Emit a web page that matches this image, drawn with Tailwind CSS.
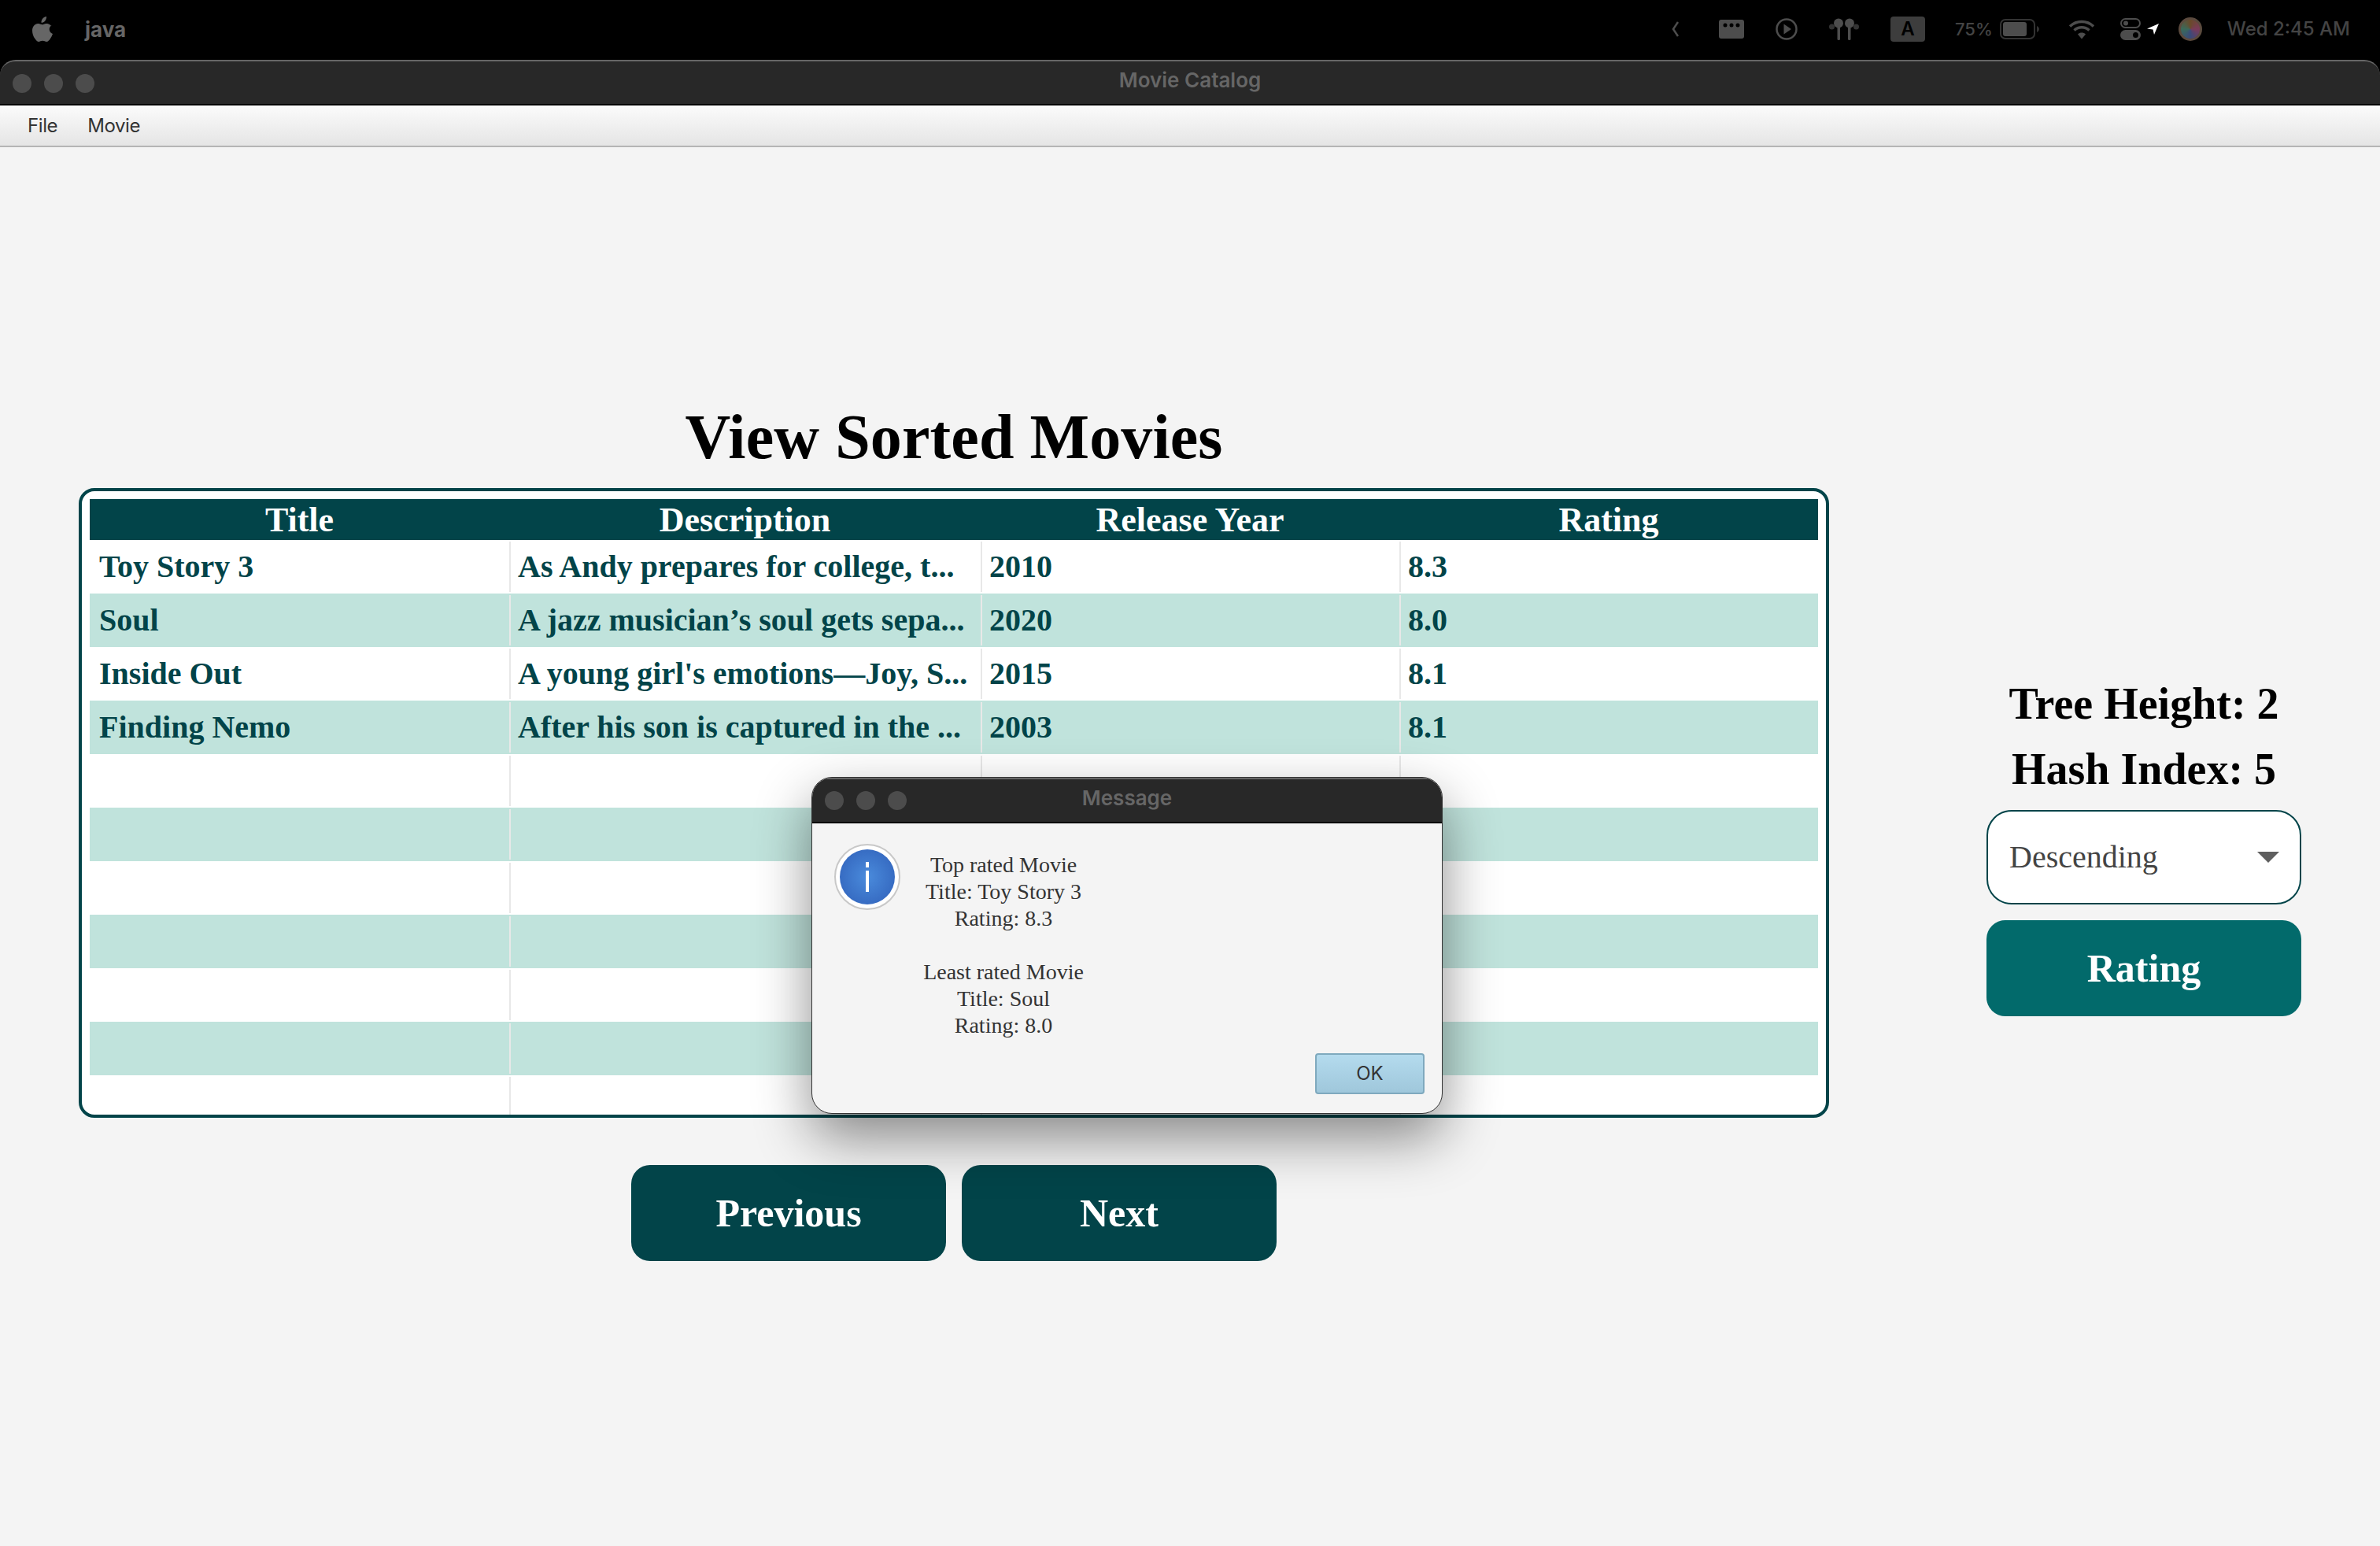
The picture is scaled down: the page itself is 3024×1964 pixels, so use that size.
<!DOCTYPE html>
<html>
<head>
<meta charset="utf-8">
<script src="https://cdn.jsdelivr.net/npm/@tailwindcss/browser@4"></script>
</head>
<body class="bg-black">
<div class="relative flex h-[1964px] w-[3024px] flex-col overflow-hidden bg-black font-['Liberation_Serif',serif]">
  <!-- macOS menu bar -->
  <header class="flex h-[76px] shrink-0 items-center pb-[2px] font-['Inter',sans-serif] text-[#4d4d4d]">
    <svg class="ml-[40px] h-[32px] w-[27px]" viewBox="0 0 27 32"><path fill="#666" d="M19 0c.2 2.200-.6 4-1.700 5.400-1.200 1.400-3 2.400-4.800 2.300-.2-2 .7-4 1.800-5.300C15.500 1.100 17.500.1 19 0zM25.800 10.900c-2 1.200-3.200 3.100-3.100 5.300 0 2.600 1.600 4.700 4.300 5.800-.8 2.200-1.800 4.300-3.200 6.200-1.300 1.900-2.700 3.700-4.700 3.800-2 0-2.700-1.200-5-1.200s-3.100 1.200-5 1.200c-2 .1-3.500-2-4.800-3.900C1.600 24.200-.4 17.400 2.300 12.800c1.300-2.300 3.700-3.800 6.300-3.800 2 0 3.800 1.300 5 1.300s3.300-1.600 5.600-1.400c1 0 3.700.4 5.500 2.700z"/></svg>
    <span class="ml-[41px] text-[26px] font-bold text-[#666]">java</span>
    <div class="ml-auto flex items-center">
      <svg class="h-[20px] w-[10px]" viewBox="0 0 10 20"><path d="M8 1 2 10l6 9" fill="none" stroke="#4d4d4d" stroke-width="2.500"/></svg>
      <svg class="ml-[50px] h-[24px] w-[32px]" viewBox="0 0 32 24"><rect width="32" height="24" rx="3" fill="#4d4d4d"/><circle cx="8" cy="7" r="2.500" fill="#000"/><circle cx="16" cy="7" r="2.500" fill="#000"/><circle cx="24" cy="7" r="2.500" fill="#000"/></svg>
      <svg class="ml-[40px] h-[28px] w-[28px]" viewBox="0 0 28 28"><circle cx="14" cy="14" r="12.500" fill="none" stroke="#4d4d4d" stroke-width="2.500"/><path d="M10.500 7.500 20 14l-9.500 6.500z" fill="#4d4d4d"/></svg>
      <svg class="ml-[39px] h-[28px] w-[40px]" viewBox="0 0 40 28"><g fill="#4d4d4d"><circle cx="13" cy="6.500" r="6"/><circle cx="27" cy="6.500" r="6"/><rect x="11.500" y="9" width="3.500" height="19" rx="1.500"/><rect x="25" y="9" width="3.500" height="19" rx="1.500"/></g><g fill="#333"><circle cx="4.500" cy="11" r="3.500"/><circle cx="35.500" cy="11" r="3.500"/></g></svg>
      <div class="ml-[39px] flex h-[32px] w-[44px] items-center justify-center rounded-[4px] bg-[#3d3d3d] text-[24px] leading-none font-semibold text-black">A</div>
      <span class="ml-[38px] text-[22px] font-medium text-[#444]">75%</span>
      <svg class="ml-[9px] h-[26px] w-[52px]" viewBox="0 0 52 26"><rect x="1" y="1" width="43" height="24" rx="6" fill="none" stroke="#333" stroke-width="2"/><rect x="4" y="4" width="30" height="18" rx="3" fill="#4d4d4d"/><path d="M47 9c2 1 3 2.500 3 4s-1 3-3 4z" fill="#333"/></svg>
      <svg class="ml-[35px] h-[26px] w-[34px]" viewBox="0 0 34 26"><g fill="none" stroke="#4d4d4d" stroke-width="3.500"><path d="M2 9.500c8.500-8 21.500-8 30 0"/><path d="M7.500 14.500c5.500-5 13.500-5 19 0"/></g><path d="M12 19.500c3-2.600 7-2.600 10 0l-5 6z" fill="#4d4d4d"/></svg>
      <svg class="ml-[32px] h-[28px] w-[26px]" viewBox="0 0 26 28"><rect x="1" y="1" width="24" height="11" rx="5.500" fill="none" stroke="#4d4d4d" stroke-width="2"/><circle cx="7" cy="6.500" r="3" fill="#4d4d4d"/><rect y="15" width="26" height="13" rx="6.500" fill="#4d4d4d"/><circle cx="19.500" cy="21.500" r="3.500" fill="#000"/></svg>
      <svg class="ml-[8px] h-[14px] w-[15px]" viewBox="0 0 15 14"><path d="M15 0 9 14 7.500 7.500 0 6.500z" fill="#fff"/></svg>
      <div class="ml-[25px] h-[30px] w-[30px] rounded-full border-[3px] border-[#5b4a3e] bg-[conic-gradient(#6a4a2a,#7a3a5a,#3a4a7a,#3a6a5a,#6a4a2a)]"></div>
      <span class="mr-[38px] ml-[32px] text-[24px] font-medium text-[#444]">Wed 2:45 AM</span>
    </div>
  </header>

  <!-- window -->
  <div class="flex flex-1 flex-col">
    <div class="grid h-[58px] shrink-0 grid-cols-[1fr_auto_1fr] items-center rounded-t-[20px] border-t-2 border-b-2 border-t-[#666] border-b-black bg-[#282828]">
      <div class="flex gap-[16px] pl-[16px] pt-[2px]">
        <span class="h-[24px] w-[24px] rounded-full bg-[#4c4c4c]"></span>
        <span class="h-[24px] w-[24px] rounded-full bg-[#4c4c4c]"></span>
        <span class="h-[24px] w-[24px] rounded-full bg-[#4c4c4c]"></span>
      </div>
      <span class="pb-[8px] font-['Inter',sans-serif] text-[26px] font-semibold text-[#666]">Movie Catalog</span>
      <span></span>
    </div>
    <nav class="flex h-[53px] shrink-0 items-center gap-[38px] border-b-2 border-[#b5b5b5] bg-gradient-to-b from-[#fbfbfb] to-[#e5e5e5] pl-[35px] font-['Inter',sans-serif] text-[24px] tracking-[-0.4px] text-[#333]">
      <span>File</span><span>Movie</span>
    </nav>

    <main class="flex flex-1 bg-[#f4f4f4]">
      <section class="flex w-[2324px] shrink-0 flex-col pl-[100px]">
        <h1 class="mt-[309px] h-[124px] text-center text-[80px] leading-[118px] tracking-[0.1px] font-bold text-black">View Sorted Movies</h1>
        <div class="h-[800px] overflow-hidden rounded-[20px] border-4 border-[#024449] bg-white px-[10px] pt-[10px] text-[#024449]">
          <div class="grid h-[52px] grid-cols-[533px_599px_532px_532px] bg-[#024449] text-center text-[44px] leading-[54px] font-bold whitespace-nowrap text-white">
            <span>Title</span><span>Description</span><span>Release Year</span><span>Rating</span>
          </div>
          <div class="grid h-[68px] grid-cols-[533px_599px_532px_532px] text-[40px] leading-[64px] font-bold whitespace-nowrap">
            <span class="my-[2px] pl-[12px]">Toy Story 3</span><span class="my-[2px] border-l-2 border-[#e8e8e8] pl-[9px]">As Andy prepares for college, t...</span><span class="my-[2px] border-l-2 border-[#e8e8e8] pl-[9px]">2010</span><span class="my-[2px] border-l-2 border-[#e8e8e8] pl-[9px]">8.3</span>
          </div>
          <div class="grid h-[68px] grid-cols-[533px_599px_532px_532px] bg-[#c0e3dc] text-[40px] leading-[64px] font-bold whitespace-nowrap">
            <span class="my-[2px] pl-[12px]">Soul</span><span class="my-[2px] border-l-2 border-[#e8e8e8] pl-[9px]">A jazz musician’s soul gets sepa...</span><span class="my-[2px] border-l-2 border-[#e8e8e8] pl-[9px]">2020</span><span class="my-[2px] border-l-2 border-[#e8e8e8] pl-[9px]">8.0</span>
          </div>
          <div class="grid h-[68px] grid-cols-[533px_599px_532px_532px] text-[40px] leading-[64px] font-bold whitespace-nowrap">
            <span class="my-[2px] pl-[12px]">Inside Out</span><span class="my-[2px] border-l-2 border-[#e8e8e8] pl-[9px]">A young girl's emotions—Joy, S...</span><span class="my-[2px] border-l-2 border-[#e8e8e8] pl-[9px]">2015</span><span class="my-[2px] border-l-2 border-[#e8e8e8] pl-[9px]">8.1</span>
          </div>
          <div class="grid h-[68px] grid-cols-[533px_599px_532px_532px] bg-[#c0e3dc] text-[40px] leading-[64px] font-bold whitespace-nowrap">
            <span class="my-[2px] pl-[12px]">Finding Nemo</span><span class="my-[2px] border-l-2 border-[#e8e8e8] pl-[9px]">After his son is captured in the ...</span><span class="my-[2px] border-l-2 border-[#e8e8e8] pl-[9px]">2003</span><span class="my-[2px] border-l-2 border-[#e8e8e8] pl-[9px]">8.1</span>
          </div>
          <div class="grid h-[68px] grid-cols-[533px_599px_532px_532px]"><span></span><span class="my-[2px] border-l-2 border-[#e8e8e8]"></span><span class="my-[2px] border-l-2 border-[#e8e8e8]"></span><span class="my-[2px] border-l-2 border-[#e8e8e8]"></span></div>
          <div class="grid h-[68px] grid-cols-[533px_599px_532px_532px] bg-[#c0e3dc]"><span></span><span class="my-[2px] border-l-2 border-[#e8e8e8]"></span><span class="my-[2px] border-l-2 border-[#e8e8e8]"></span><span class="my-[2px] border-l-2 border-[#e8e8e8]"></span></div>
          <div class="grid h-[68px] grid-cols-[533px_599px_532px_532px]"><span></span><span class="my-[2px] border-l-2 border-[#e8e8e8]"></span><span class="my-[2px] border-l-2 border-[#e8e8e8]"></span><span class="my-[2px] border-l-2 border-[#e8e8e8]"></span></div>
          <div class="grid h-[68px] grid-cols-[533px_599px_532px_532px] bg-[#c0e3dc]"><span></span><span class="my-[2px] border-l-2 border-[#e8e8e8]"></span><span class="my-[2px] border-l-2 border-[#e8e8e8]"></span><span class="my-[2px] border-l-2 border-[#e8e8e8]"></span></div>
          <div class="grid h-[68px] grid-cols-[533px_599px_532px_532px]"><span></span><span class="my-[2px] border-l-2 border-[#e8e8e8]"></span><span class="my-[2px] border-l-2 border-[#e8e8e8]"></span><span class="my-[2px] border-l-2 border-[#e8e8e8]"></span></div>
          <div class="grid h-[68px] grid-cols-[533px_599px_532px_532px] bg-[#c0e3dc]"><span></span><span class="my-[2px] border-l-2 border-[#e8e8e8]"></span><span class="my-[2px] border-l-2 border-[#e8e8e8]"></span><span class="my-[2px] border-l-2 border-[#e8e8e8]"></span></div>
          <div class="grid h-[68px] grid-cols-[533px_599px_532px_532px]"><span></span><span class="my-[2px] border-l-2 border-[#e8e8e8]"></span><span class="my-[2px] border-l-2 border-[#e8e8e8]"></span><span class="my-[2px] border-l-2 border-[#e8e8e8]"></span></div>
        </div>
        <div class="mt-[60px] flex justify-center gap-[20px]">
          <button class="h-[122px] w-[400px] rounded-[24px] bg-[#024449] text-[50px] font-bold text-white">Previous</button>
          <button class="h-[122px] w-[400px] rounded-[24px] bg-[#024449] text-[50px] font-bold text-white">Next</button>
        </div>
      </section>

      <aside class="ml-[200px] flex w-[400px] flex-col items-center pt-[666px]">
        <p class="h-[83px] text-[56px] leading-[83px] font-bold whitespace-nowrap text-black">Tree Height: 2</p>
        <p class="h-[83px] text-[56px] leading-[83px] font-bold whitespace-nowrap text-black">Hash Index: 5</p>
        <div class="mt-[10px] flex h-[120px] w-full items-center justify-between rounded-[32px] border-2 border-[#024449] bg-white pr-[26px] pl-[27px] text-[40px] text-[#444]">
          <span>Descending</span>
          <svg class="h-[14px] w-[28px]" viewBox="0 0 28 14"><path d="M0 0h28L14 14z" fill="#5f5f5f"/></svg>
        </div>
        <button class="mt-[20px] h-[122px] w-full rounded-[24px] bg-[#026a6b] text-[50px] font-bold text-white">Rating</button>
      </aside>
    </main>
  </div>

  <!-- modal dialog -->
  <div class="absolute top-[987px] left-[1031px] flex h-[428px] w-[802px] flex-col overflow-hidden rounded-[26px] border border-[#333] bg-[#f4f4f4] shadow-[0_30px_70px_rgba(0,0,0,0.45)]">
    <div class="relative flex h-[58px] shrink-0 items-center justify-center border-t-2 border-b-2 border-t-[#666] border-b-black bg-[#282828]">
      <div class="absolute left-[16px] top-[15px] flex gap-[16px]">
        <span class="h-[24px] w-[24px] rounded-full bg-[#4c4c4c]"></span>
        <span class="h-[24px] w-[24px] rounded-full bg-[#4c4c4c]"></span>
        <span class="h-[24px] w-[24px] rounded-full bg-[#4c4c4c]"></span>
      </div>
      <span class="pb-[8px] font-['Inter',sans-serif] text-[26px] font-semibold text-[#666]">Message</span>
    </div>
    <div class="flex flex-1 flex-col">
      <div class="flex pt-[26px] pl-[28px]">
        <div class="flex h-[84px] w-[84px] shrink-0 items-center justify-center rounded-full border-2 border-[#c8c8c8] bg-white">
          <div class="flex h-[70px] w-[70px] items-center justify-center rounded-full bg-[radial-gradient(circle,#4a8bdc,#2f5fb8)]">
            <svg class="h-[38px] w-[6px]" viewBox="0 0 6 38"><rect x="1" width="4" height="7" fill="#fff"/><rect x="1" y="11" width="4" height="27" fill="#fff"/></svg>
          </div>
        </div>
        <div class="ml-[28px] w-[206px] pt-[10px] text-center text-[28px] leading-[34px] whitespace-nowrap text-[#333]">
          <p>Top rated Movie</p><p>Title: Toy Story 3</p><p>Rating: 8.3</p><p class="h-[34px]"></p><p>Least rated Movie</p><p>Title: Soul</p><p>Rating: 8.0</p>
        </div>
      </div>
      <div class="mt-auto flex justify-end pr-[22px] pb-[24px]">
        <button class="h-[52px] w-[139px] rounded-[4px] border-2 border-[#7fa9be] bg-gradient-to-b from-[#b4dbee] to-[#9fc7db] font-['Inter',sans-serif] text-[24px] text-[#333]">OK</button>
      </div>
    </div>
  </div>
</div>
</body>
</html>
